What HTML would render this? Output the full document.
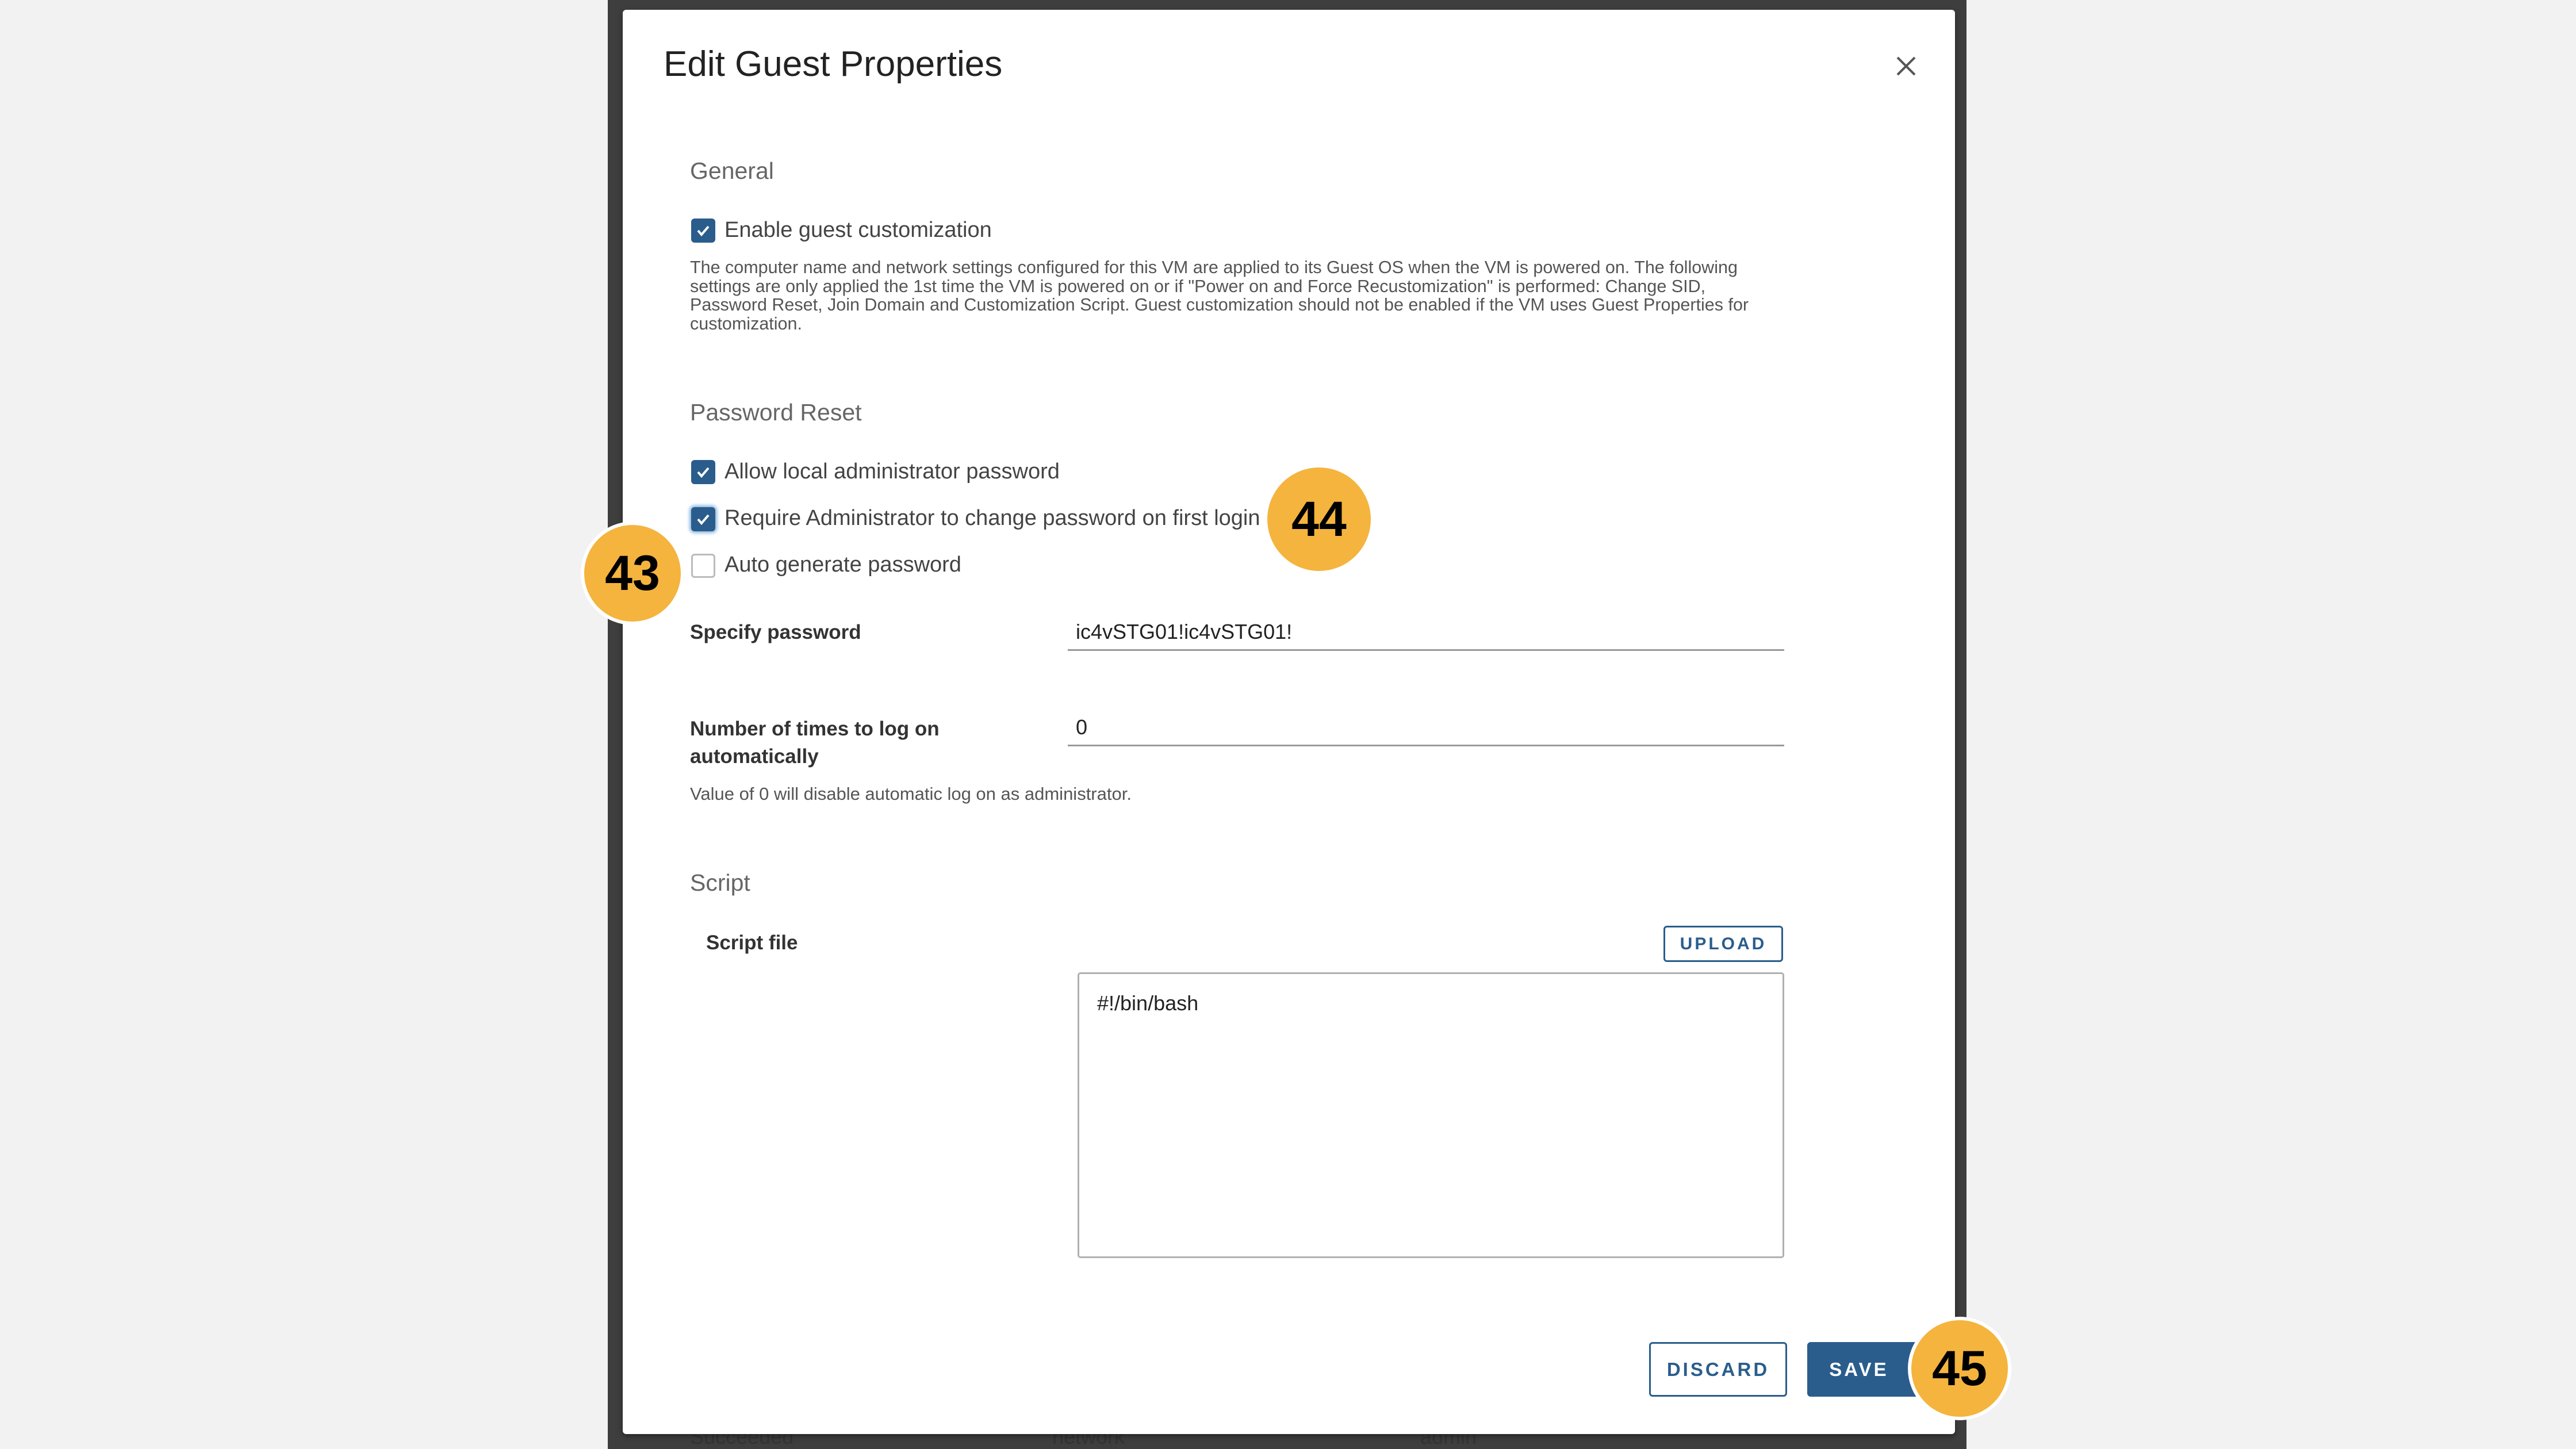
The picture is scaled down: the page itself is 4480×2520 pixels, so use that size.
<!DOCTYPE html>
<html><head><meta charset="utf-8"><style>
*{margin:0;padding:0;box-sizing:border-box}
body{width:4480px;height:2520px;background:#f2f2f2;position:relative;overflow:hidden;font-family:"Liberation Sans",sans-serif;color:#333}
.a{position:absolute;white-space:nowrap}
.dark{position:absolute;left:1057px;top:0;width:2363px;height:2520px;background:#3e3e3e}
.modal{position:absolute;left:1083px;top:17px;width:2317px;height:2477px;background:#fff;border-radius:6px;box-shadow:0 4px 10px rgba(0,0,0,.4)}
.cb{position:absolute;width:42px;height:42px;border-radius:6px;background:#2a5d8c}
.cb svg{position:absolute;left:7px;top:7px}
.lbl{font-size:38px;color:#444}
.h{font-size:41px;color:#666}
.b{font-size:35px;font-weight:bold;color:#333}
.badge{position:absolute;width:180px;height:180px;border-radius:50%;background:#f4b43e;border:6px solid #fff;font-weight:bold;font-size:86px;color:#000;text-align:center;line-height:168px}
.btn{position:absolute;border:3px solid #2a5d8c;border-radius:6px;color:#2a5d8c;font-weight:bold;letter-spacing:4px;text-align:center}
</style></head><body>
<div class="dark"></div>
<div class="a" style="left:1200px;top:2478px;font-size:36px;color:#333">Succeeded</div>
<div class="a" style="left:1830px;top:2478px;font-size:36px;color:#333">network</div>
<div class="a" style="left:2470px;top:2478px;font-size:36px;color:#333">admin</div>
<div class="modal"></div>
<div class="a" style="left:1154px;top:76px;font-size:62px;color:#222">Edit Guest Properties</div>
<svg class="a" style="left:3298px;top:98px" width="34" height="34" viewBox="0 0 34 34"><path d="M2 2L32 32M32 2L2 32" stroke="#555" stroke-width="4"/></svg>
<div class="a h" style="left:1200px;top:274px">General</div>
<div class="cb" style="left:1202px;top:380px"><svg width="28" height="28" viewBox="0 0 28 28"><path d="M5 14l6 7 12-14" stroke="#fff" stroke-width="4" fill="none"/></svg></div>
<div class="a lbl" style="left:1260px;top:379px">Enable guest customization</div>
<div class="a" style="left:1200px;top:449px;font-size:30.5px;line-height:32.5px;color:#555">The computer name and network settings configured for this VM are applied to its Guest OS when the VM is powered on. The following<br>settings are only applied the 1st time the VM is powered on or if "Power on and Force Recustomization" is performed: Change SID,<br>Password Reset, Join Domain and Customization Script. Guest customization should not be enabled if the VM uses Guest Properties for<br>customization.</div>
<div class="a h" style="left:1200px;top:694px">Password Reset</div>
<div class="cb" style="left:1202px;top:800px"><svg width="28" height="28" viewBox="0 0 28 28"><path d="M5 14l6 7 12-14" stroke="#fff" stroke-width="4" fill="none"/></svg></div>
<div class="a lbl" style="left:1260px;top:799px">Allow local administrator password</div>
<div class="cb" style="left:1202px;top:882px;box-shadow:0 0 6px 3px #8ab8e0"><svg width="28" height="28" viewBox="0 0 28 28"><path d="M5 14l6 7 12-14" stroke="#fff" stroke-width="4" fill="none"/></svg></div>
<div class="a lbl" style="left:1260px;top:880px">Require Administrator to change password on first login</div>
<div style="position:absolute;left:1202px;top:963px;width:42px;height:42px;border:3px solid #bbb;border-radius:6px"></div>
<div class="a lbl" style="left:1260px;top:961px">Auto generate password</div>
<div class="a b" style="left:1200px;top:1080px">Specify password</div>
<div class="a" style="left:1871px;top:1078px;font-size:36px;color:#222">ic4vSTG01!ic4vSTG01!</div>
<div class="a" style="left:1857px;top:1129px;width:1246px;height:3px;background:#999"></div>
<div class="a b" style="left:1200px;top:1244px;line-height:48px">Number of times to log on<br>automatically</div>
<div class="a" style="left:1871px;top:1244px;font-size:36px;color:#222">0</div>
<div class="a" style="left:1857px;top:1295px;width:1246px;height:3px;background:#999"></div>
<div class="a" style="left:1200px;top:1363px;font-size:31px;color:#555">Value of 0 will disable automatic log on as administrator.</div>
<div class="a h" style="left:1200px;top:1512px">Script</div>
<div class="a b" style="left:1228px;top:1620px">Script file</div>
<div class="btn" style="left:2893px;top:1610px;width:208px;height:63px;font-size:30px;line-height:57px">UPLOAD</div>
<div class="a" style="left:1874px;top:1691px;width:1229px;height:497px;border:3px solid #b0b0b0;border-radius:5px"></div>
<div class="a" style="left:1908px;top:1724px;font-size:36px;color:#222">#!/bin/bash</div>
<div class="btn" style="left:2868px;top:2334px;width:240px;height:95px;font-size:33px;line-height:89px">DISCARD</div>
<div class="btn" style="left:3143px;top:2334px;width:200px;height:95px;font-size:33px;line-height:89px;background:#2a5d8c;color:#fff;padding-right:20px">SAVE</div>
<div class="badge" style="left:2204px;top:813px;border-color:transparent">44</div>
<div class="badge" style="left:1010px;top:907px">43</div>
<div class="badge" style="left:3318px;top:2290px">45</div>
</body></html>
